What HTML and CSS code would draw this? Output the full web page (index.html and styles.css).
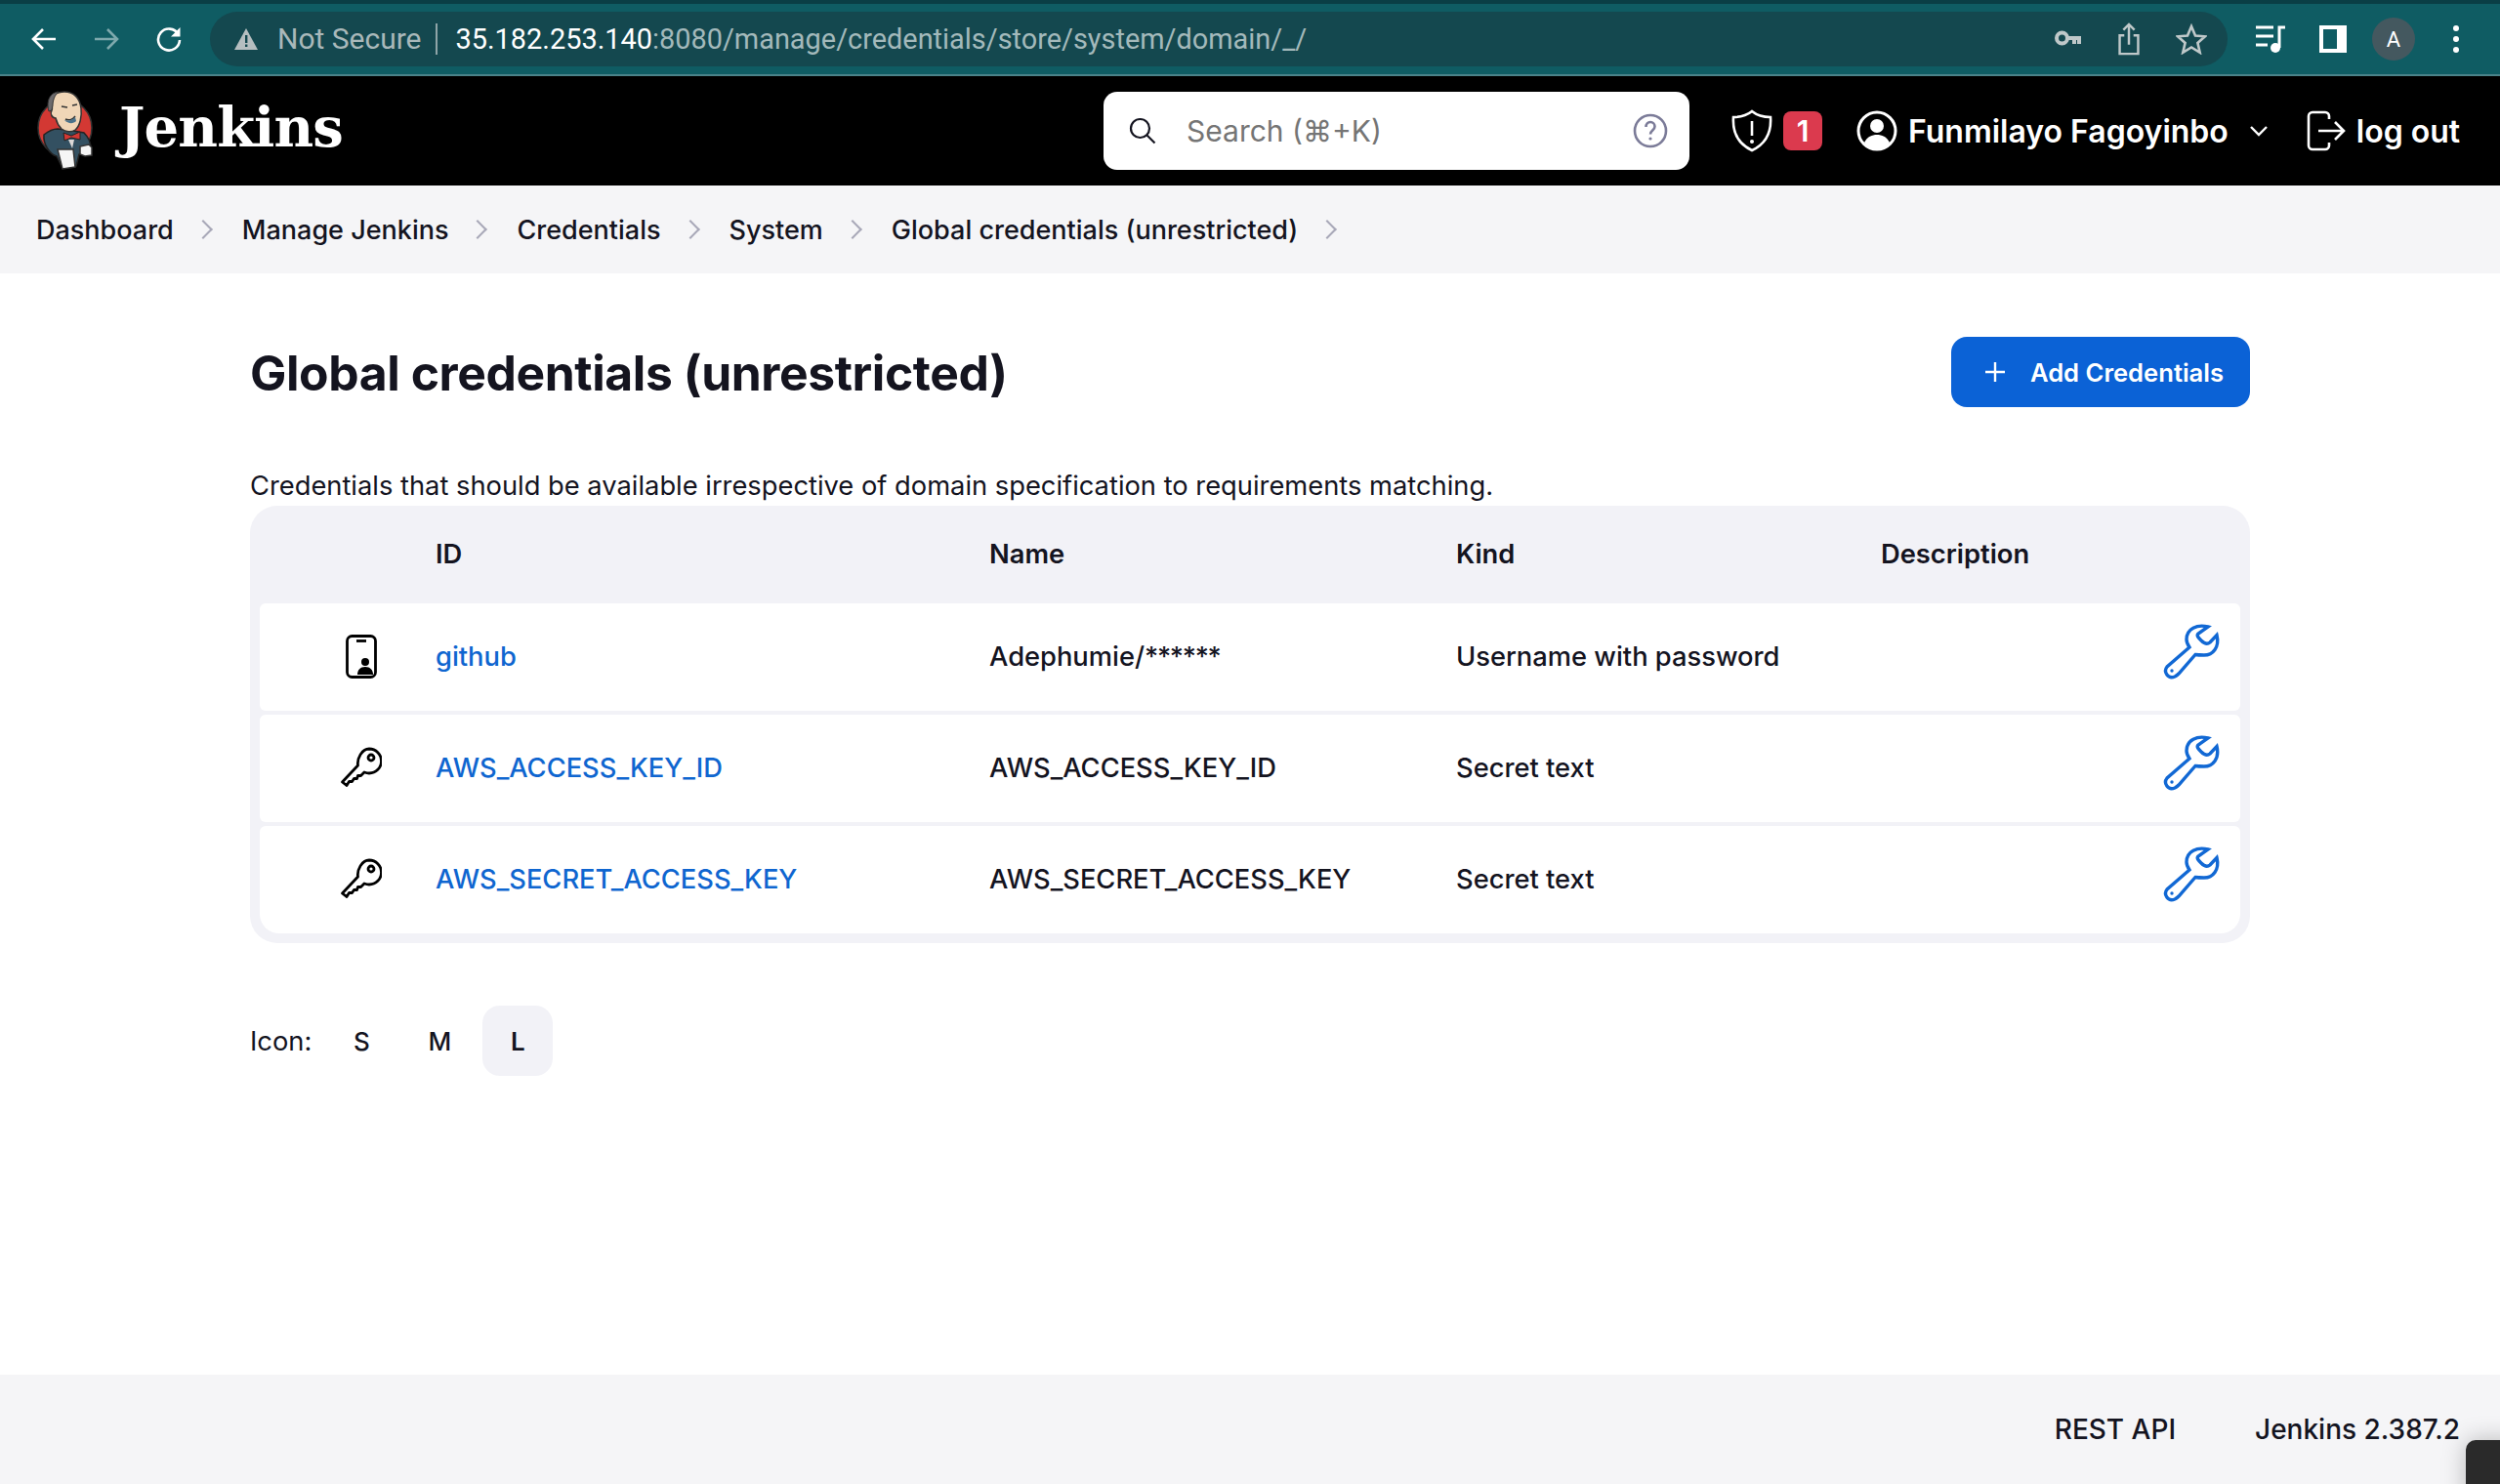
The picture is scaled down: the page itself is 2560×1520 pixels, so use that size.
FILE: index.html
```html
<!DOCTYPE html>
<html lang="en">
<head>
  <meta charset="UTF-8">
  <title>Global credentials (unrestricted) - Jenkins</title>
  <link rel="stylesheet" href="styles.css">
</head>
<body>
  <div class="tab-strip"></div>
  <div class="toolbar">
    <svg class="nav-icon" viewBox="0 0 28 28"><path d="M26 14H3M13 4L3 14l10 10" /></svg>
    <svg class="nav-icon nav-off" viewBox="0 0 28 28"><path d="M2 14h23M15 4l10 10-10 10" /></svg>
    <svg class="nav-icon" viewBox="0 0 28 28"><path d="M23.500 9A11 11 0 1 0 25 15" /><path class="solid" d="M25.500 2v9.500h-9.500z" /></svg>
    <div class="omnibox">
      <svg class="warn" viewBox="0 0 26 24"><path d="M13 1L25 23H1z" /><rect class="warn-mark" x="12" y="8" width="2.400" height="8" /><rect class="warn-mark" x="12" y="17.500" width="2.400" height="2.500" /></svg>
      <span class="not-secure">Not Secure</span>
      <span class="url"><b>35.182.253.140</b>:8080/manage/credentials/store/system/domain/_/</span>
      <div class="omni-icons">
        <svg class="omni-key" viewBox="0 0 28 20"><circle cx="7.500" cy="9" r="5.500" /><path d="M13 9h14M20 9v6M25 9v6" /></svg>
        <svg class="omni-icon" viewBox="0 0 24 36"><path d="M7 14H2v20h20V14h-5M12 24V2M6 8l6-6 6 6" /></svg>
        <svg class="omni-icon" viewBox="0 0 32 32"><path d="M16 3l4 9.500 10 .8-7.600 6.600 2.300 9.900L16 24.500 7.300 29.800l2.300-9.900L2 13.300l10-.8z" /></svg>
      </div>
    </div>
    <div class="browser-icons">
      <svg class="media" viewBox="0 0 32 30"><path d="M0 3h18M0 12h18M0 21h12" /><path d="M24 24V3h6" /><circle class="solid" cx="20" cy="24" r="5" /></svg>
      <div class="side-panel"></div>
      <div class="avatar">A</div>
      <div class="dots"><i></i><i></i><i></i></div>
    </div>
  </div>

  <header class="page-header">
    <a class="brand">
      <svg class="butler" viewBox="0 0 60 84">
        <ellipse cx="29.500" cy="39" rx="27.500" ry="28.500" fill="#d33833" stroke="#333" stroke-width="1.500" />
        <path d="M8 46c5-4 10-6 14-6l16 2 11 2c5 5 7 10 7 16l-12 6-3 12-14 2-6-12C14 66 7 56 8 46z" fill="#335061" stroke="#222" stroke-width="1.500" />
        <path d="M15 14C15 6 21 2 29 2c9 0 16 6 17 17 1 8-1 18-6 22-4 3-10 2-14-1-3-3-5-7-6-11-4 0-6-5-4-8 1-2 0-5-1-7z" fill="#f0d6b7" stroke="#333" stroke-width="1.500" />
        <path d="M13 22c-2-7-1-14 4-18 2-1 4-2 6-2-4 3-6 9-6 14l-1 5z" fill="#6d6b6d" stroke="#333" stroke-width="1" />
        <path d="M26 17l6 1M37 16l5-1M30 30c4 2 8 0 10-3" fill="none" stroke="#333" stroke-width="1.500" />
        <path d="M29 31c4 1 8 0 11-3l1 4c-3 3-8 3-12-1z" fill="#49728b" />
        <path d="M28 44l8 3 9-4v8l-9-2-7 3z" fill="#d33833" stroke="#222" stroke-width="1" />
        <path d="M33 51h6l-2 9z" fill="#dcd9d8" />
        <path d="M22 61h16l2 18-13 2z" fill="#f5f5f5" stroke="#333" stroke-width="1.500" />
        <path d="M45 58l9-2 3 3v8l-7 1-5-2z" fill="#f5f5f5" stroke="#333" stroke-width="1.500" />
      </svg>
      <span class="brand-name">Jenkins</span>
    </a>
    <div class="search-box">
      <svg class="search-icon" viewBox="0 0 28 28"><circle cx="11.500" cy="11.500" r="9.500" /><path d="M18.500 18.500l8 8" /></svg>
      <span class="search-hint">Search (⌘+K)</span>
      <svg class="help-icon" viewBox="0 0 36 36"><circle cx="18" cy="18" r="16" /><path d="M13.500 14c0-3 2-5 4.500-5s4.500 2 4.500 4.500c0 4-4.500 4-4.500 8" /><circle class="help-dot" cx="18" cy="26" r="1.600" /></svg>
    </div>
    <div class="monitor">
      <svg class="shield" viewBox="0 0 44 44"><path d="M22 2c5 4 11 6 19 6 1 15-4 27-19 34C7 35 2 23 3 8c8 0 14-2 19-6z" /><path d="M22 12v15" /><circle class="white-dot" cx="22" cy="33" r="2" /></svg>
      <span class="badge">1</span>
    </div>
    <svg class="user-icon" viewBox="0 0 42 42"><circle cx="21" cy="21" r="19" /><circle class="white-dot" cx="21" cy="16" r="7" /><path class="white-dot" d="M8 33c3-6 8-8 13-8s10 2 13 8c-3 4-8 7-13 7s-10-3-13-7z" /></svg>
    <span class="user-name">Funmilayo Fagoyinbo</span>
    <svg class="chevron-down" viewBox="0 0 20 12"><path d="M2 2l8 8 8-8" /></svg>
    <svg class="logout-icon" viewBox="0 0 40 42"><path d="M23 9V6a4 4 0 0 0-4-4H6a4 4 0 0 0-4 4v30a4 4 0 0 0 4 4h13a4 4 0 0 0 4-4v-3" /><path d="M12 21h26M29 12l9 9-9 9" /></svg>
    <span class="logout-text">log out</span>
  </header>

  <nav class="breadcrumbs">
    <a>Dashboard</a><span class="crumb-sep"></span>
    <a>Manage Jenkins</a><span class="crumb-sep"></span>
    <a>Credentials</a><span class="crumb-sep"></span>
    <a>System</a><span class="crumb-sep"></span>
    <a>Global credentials (unrestricted)</a><span class="crumb-sep"></span>
  </nav>

  <main class="content">
    <div class="title-row">
      <h1>Global credentials (unrestricted)</h1>
      <button class="add-button">
        <svg class="plus" viewBox="0 0 24 24"><path d="M12 2v20M2 12h20" /></svg>
        Add Credentials
      </button>
    </div>
    <p class="intro">Credentials that should be available irrespective of domain specification to requirements matching.</p>

    <div class="cred-table">
      <div class="cred-head">
        <span></span><span>ID</span><span>Name</span><span>Kind</span><span>Description</span><span></span>
      </div>
      <div class="cred-row">
        <span class="type-cell">
          <svg class="phone" viewBox="0 0 32 45"><rect x="1.500" y="1.500" width="29" height="42" rx="5" /><path d="M11 6.500h10" /><circle class="black-dot" cx="20" cy="28" r="4" /><path class="black-dot" d="M12 41c0-5 3-8 8-8s8 3 8 8z" /></svg>
        </span>
        <a class="cred-link">github</a>
        <span>Adephumie/<i class="mask">******</i></span>
        <span>Username with password</span>
        <span></span>
        <a class="wrench-cell"><svg class="wrench" viewBox="0 0 56 56"><path d="M45 3C34 0 23 5 23 16c0 3 1 5 3 8L3 44c-4 5 1 13 8 10 2-1 3-2 4-3l17-19.500c3 .5 6 .5 9 .5 9 0 16-8 13-20.500L47 19c-3 2.500-6 1-9-2s-5-5-3-7z" /><circle class="wrench-hole" cx="8" cy="48" r="1.700" /></svg></a>
      </div>
      <div class="cred-row">
        <span class="type-cell">
          <svg class="key" viewBox="0 0 42 42"><path d="M29 2a12.500 12.500 0 0 1 0 25c-2 0-3.500-.5-5-1l-3.500 3.500h-3l-1 3h-3l-2 3h-3L6 39.500 1.500 36 17.500 19c-1-7 4-17 11.500-17z" /><circle cx="31" cy="11" r="3" /></svg>
        </span>
        <a class="cred-link">AWS_ACCESS_KEY_ID</a>
        <span>AWS_ACCESS_KEY_ID</span>
        <span>Secret text</span>
        <span></span>
        <a class="wrench-cell"><svg class="wrench" viewBox="0 0 56 56"><path d="M45 3C34 0 23 5 23 16c0 3 1 5 3 8L3 44c-4 5 1 13 8 10 2-1 3-2 4-3l17-19.500c3 .5 6 .5 9 .5 9 0 16-8 13-20.500L47 19c-3 2.500-6 1-9-2s-5-5-3-7z" /><circle class="wrench-hole" cx="8" cy="48" r="1.700" /></svg></a>
      </div>
      <div class="cred-row">
        <span class="type-cell">
          <svg class="key" viewBox="0 0 42 42"><path d="M29 2a12.500 12.500 0 0 1 0 25c-2 0-3.500-.5-5-1l-3.500 3.500h-3l-1 3h-3l-2 3h-3L6 39.500 1.500 36 17.500 19c-1-7 4-17 11.500-17z" /><circle cx="31" cy="11" r="3" /></svg>
        </span>
        <a class="cred-link">AWS_SECRET_ACCESS_KEY</a>
        <span>AWS_SECRET_ACCESS_KEY</span>
        <span>Secret text</span>
        <span></span>
        <a class="wrench-cell"><svg class="wrench" viewBox="0 0 56 56"><path d="M45 3C34 0 23 5 23 16c0 3 1 5 3 8L3 44c-4 5 1 13 8 10 2-1 3-2 4-3l17-19.500c3 .5 6 .5 9 .5 9 0 16-8 13-20.500L47 19c-3 2.500-6 1-9-2s-5-5-3-7z" /><circle class="wrench-hole" cx="8" cy="48" r="1.700" /></svg></a>
      </div>
    </div>

    <div class="icon-size">
      <span class="icon-label">Icon:</span>
      <a class="size-option">S</a>
      <a class="size-option">M</a>
      <a class="size-option active">L</a>
    </div>
  </main>

  <footer class="page-footer">
    <a>REST API</a>
    <a>Jenkins 2.387.2</a>
  </footer>
  <div class="corner-popup"></div>
</body>
</html>
```

FILE: styles.css
```css
html, body { height: 100%; }
body { font-family: 'Inter', sans-serif; margin: 0; background-color: #fff; color: #14141f; display: flex; flex-direction: column; height: 1520px; overflow: hidden; position: relative; font-size: 27.3px; }
svg { display: block; flex: none; }

/* browser chrome */
.tab-strip { height: 4px; background-color: #0a3e45; }
.toolbar { height: 72px; background-color: #0f5c63; border-bottom: 2px solid #4a8389; display: flex; align-items: center; padding-left: 31px; box-sizing: content-box; }
.nav-icon { width: 28px; height: 28px; fill: none; stroke: #fff; stroke-width: 2.6; margin-right: 36px; }
.nav-icon .solid { fill: #fff; stroke: none; }
.nav-off { stroke: #7ea9ad; }
.omnibox { width: 2066px; height: 56px; margin-left: -8px; border-radius: 28px; background-color: #14484f; display: flex; align-items: center; padding-left: 24px; box-sizing: border-box; font-family: 'Roboto', sans-serif; font-size: 28.9px; }
.warn { width: 26px; height: 24px; fill: #b5bec0; }
.warn-mark { fill: #14484f; }
.not-secure { color: #a9b8ba; font-size: 30px; margin-left: 19px; padding-right: 14px; border-right: 2px solid #8fa5a8; line-height: 32px; }
.url { color: #a3b9bb; margin-left: 19px; }
.url b { color: #fff; font-weight: 400; }
.omni-icons { margin-left: auto; display: flex; align-items: center; gap: 36px; padding-right: 21px; }
.omni-key { width: 28px; height: 20px; fill: none; stroke: #bfc8c9; stroke-width: 4; }
.omni-icon { width: 24px; height: 34px; fill: none; stroke: #bfc8c9; stroke-width: 2.6; }
.omni-icon:last-child { width: 32px; height: 32px; }
.browser-icons { display: flex; align-items: center; margin-left: 29px; }
.media { width: 32px; height: 30px; fill: none; stroke: #fff; stroke-width: 3; }
.media .solid { fill: #fff; stroke: none; }
.side-panel { width: 28px; height: 28px; margin-left: 33px; background-color: #fff; position: relative; box-sizing: border-box; border: 4px solid #fff; }
.side-panel::before { content: ""; display: block; width: 14px; height: 20px; background-color: #0f5c63; }
.avatar { width: 44px; height: 44px; border-radius: 50%; margin-left: 26px; background-color: #44585f; color: #fff; font-family: 'Roboto', sans-serif; font-size: 22px; display: flex; align-items: center; justify-content: center; }
.dots { margin-left: 39px; display: flex; flex-direction: column; gap: 5px; }
.dots i { display: block; width: 6px; height: 6px; border-radius: 50%; background-color: #fff; }

/* jenkins header */
.page-header { height: 112px; background-color: #000; color: #fff; display: flex; align-items: center; padding-left: 37px; }
.brand { display: flex; align-items: center; width: 1093px; }
.butler { width: 60px; height: 84px; }
.brand-name { font-family: 'DejaVu Serif', serif; font-weight: 700; font-size: 56px; margin: -8px 0 0 25px; letter-spacing: -0.9px; }
.search-box { width: 600px; height: 80px; background-color: #fff; border-radius: 14px; display: flex; align-items: center; padding: 0 22px 0 26px; box-sizing: border-box; }
.search-icon { width: 28px; height: 28px; fill: none; stroke: #14141f; stroke-width: 2.2; }
.search-hint { color: #757575; margin-left: 31px; font-size: 30px; }
.help-icon { width: 36px; height: 36px; margin-left: auto; fill: none; stroke: #7b7b98; stroke-width: 2.6; }
.help-dot { fill: #7b7b98; stroke: none; }
.monitor { display: flex; align-items: center; margin-left: 42px; gap: 10px; }
.shield { width: 44px; height: 44px; fill: none; stroke: #fff; stroke-width: 2.6; }
.white-dot { fill: #fff; stroke: none; }
.badge { width: 40px; height: 40px; background-color: #db3a4e; border-radius: 8px; font-size: 30px; font-weight: 600; display: flex; align-items: center; justify-content: center; }
.user-icon { width: 42px; height: 42px; margin-left: 35px; fill: none; stroke: #fff; stroke-width: 3; }
.user-name { font-size: 32px; font-weight: 600; margin-left: 11px; white-space: nowrap; }
.chevron-down { width: 20px; height: 12px; margin-left: 21px; fill: none; stroke: #fff; stroke-width: 2.4; }
.logout-icon { width: 40px; height: 42px; margin-left: 39px; fill: none; stroke: #fff; stroke-width: 2.6; }
.logout-text { font-size: 32px; font-weight: 600; margin-left: 11px; }

/* breadcrumbs */
.breadcrumbs { height: 90px; background-color: #f5f5f7; display: flex; align-items: center; padding-left: 37px; font-size: 27px; font-weight: 500; }
.crumb-sep { width: 12px; height: 12px; border-top: 2px solid #a8a8b8; border-right: 2px solid #a8a8b8; transform: rotate(45deg); margin: 0 33px 0 23px; }

/* main */
.content { flex: 1; padding: 65px 256px 0; }
.title-row { display: flex; align-items: center; justify-content: space-between; }
h1 { font-size: 49.8px; font-weight: 700; margin: 2px 0 0; letter-spacing: -0.4px; }
.add-button { height: 72px; width: 306px; background-color: #0b62d6; color: #fff; border: none; border-radius: 16px; padding: 0 0 0 6px; font-family: inherit; font-size: 25.6px; font-weight: 600; display: flex; align-items: center; justify-content: center; gap: 24px; }
.plus { width: 24px; height: 24px; fill: none; stroke: #fff; stroke-width: 2.4; }
.intro { margin: 64px 0 0; line-height: 34px; }

.cred-table { background-color: #f2f2f7; border-radius: 28px; padding: 0 10px 10px; margin-top: 3px; }
.cred-head, .cred-row { display: grid; grid-template-columns: 180px 567px 478px 435px 1fr 78px; align-items: center; }
.cred-head { height: 100px; font-weight: 600; padding-bottom: 2px; box-sizing: border-box; }
.cred-row { height: 110px; background-color: #fff; margin-bottom: 4px; border-radius: 6px; padding-bottom: 2px; box-sizing: border-box; }
.cred-row:first-of-type { border-top-left-radius: 20px; border-top-right-radius: 20px; }
.cred-row:last-child { margin-bottom: 0; border-bottom-left-radius: 20px; border-bottom-right-radius: 20px; }
.type-cell { display: flex; justify-content: center; padding-left: 28px; box-sizing: border-box; }
.phone { width: 32px; height: 45px; fill: none; stroke: #000; stroke-width: 2.8; }
.black-dot { fill: #000; stroke: none; }
.key { width: 42px; height: 42px; fill: none; stroke: #000; stroke-width: 2.8; stroke-linejoin: round; }
.cred-link { color: #0f66d0; font-weight: 500; }
.cred-row span { font-weight: 500; }
.mask { font-style: normal; letter-spacing: -1.3px; }
.wrench-cell { display: flex; margin-top: -10px; }
.wrench { width: 56px; height: 56px; fill: none; stroke: #1168d4; stroke-width: 3.4; overflow: visible; }
.wrench-hole { fill: #1168d4; stroke: none; }

.icon-size { display: flex; align-items: center; margin-top: 64px; }
.icon-label { margin-right: 15px; }
.size-option { width: 72px; height: 72px; border-radius: 18px; display: flex; align-items: center; justify-content: center; font-size: 26px; font-weight: 500; margin-right: 8px; }
.size-option.active { background-color: #f2f2f7; font-weight: 600; }

/* footer */
.page-footer { height: 112px; background-color: #f5f5f7; display: flex; align-items: center; justify-content: flex-end; gap: 81px; padding-right: 41px; font-size: 28px; font-weight: 500; }
.corner-popup { position: absolute; left: 2525px; top: 1475px; width: 60px; height: 70px; background-color: #2a2a2a; border-radius: 10px; box-shadow: 0 0 24px rgba(0, 0, 0, 0.25); }
```
